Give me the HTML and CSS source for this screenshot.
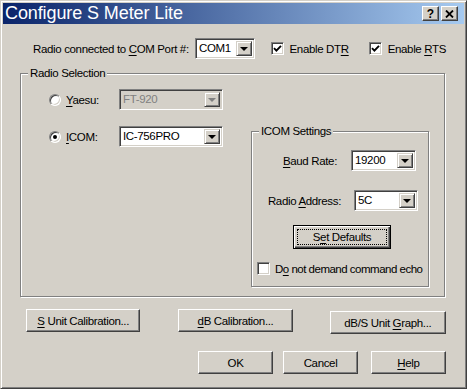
FILE: index.html
```html
<!DOCTYPE html>
<html lang="en">
<head>
    <meta charset="UTF-8">
    <title>Configure S Meter Lite</title>
    <link rel="stylesheet" href="styles.css">
</head>
<body>
    <div class="window">
        <div class="titlebar">
            <span class="title">Configure S Meter Lite</span>
            <div class="tb-buttons">
                <span class="tb-btn tb-help">?</span>
                <span class="tb-btn">
                    <svg width="9" height="8" viewBox="0 0 9 8"><path d="M1 0.5 L8 7.5 M8 0.5 L1 7.5" stroke="#000" stroke-width="1.8" fill="none"/></svg>
                </span>
            </div>
        </div>

        <div class="dialog">
            <!-- COM port row -->
            <div class="com-row">
                <span class="com-label">Radio connected to <u>C</u>OM Port #:</span>
                <div class="combo combo-com">
                    <span class="combo-text">COM1</span>
                    <span class="combo-btn"><i class="arrow"></i></span>
                </div>
                <span class="check check-dtr"><svg width="9" height="9" viewBox="0 0 9 9"><path d="M1 4.2 L3.4 6.6 L8 1.8" stroke="#000" stroke-width="1.9" fill="none"/></svg></span>
                <span class="check-label">Enable DT<u>R</u></span>
                <span class="check check-rts"><svg width="9" height="9" viewBox="0 0 9 9"><path d="M1 4.2 L3.4 6.6 L8 1.8" stroke="#000" stroke-width="1.9" fill="none"/></svg></span>
                <span class="check-label">Enable <u>R</u>TS</span>
            </div>

            <!-- Radio selection group -->
            <div class="group radio-group">
                <span class="group-title">Radio Selection</span>
                <div class="radio-layout">
                    <div class="radio-col">
                        <div class="radio-row">
                            <span class="radio"></span>
                            <span class="radio-label"><u>Y</u>aesu:</span>
                            <div class="combo combo-radio disabled">
                                <span class="combo-text">FT-920</span>
                                <span class="combo-btn"><i class="arrow"></i></span>
                            </div>
                        </div>
                        <div class="radio-row radio-row-2">
                            <span class="radio selected"></span>
                            <span class="radio-label"><u>I</u>COM:</span>
                            <div class="combo combo-radio">
                                <span class="combo-text">IC-756PRO</span>
                                <span class="combo-btn"><i class="arrow"></i></span>
                            </div>
                        </div>
                    </div>

                    <div class="group icom-group">
                        <span class="group-title">ICOM Settings</span>
                        <div class="setting-row baud-row">
                            <span><u>B</u>aud Rate:</span>
                            <div class="combo combo-baud">
                                <span class="combo-text">19200</span>
                                <span class="combo-btn"><i class="arrow"></i></span>
                            </div>
                        </div>
                        <div class="setting-row addr-row">
                            <span>Radio <u>A</u>ddress:</span>
                            <div class="combo combo-addr">
                                <span class="combo-text">5C</span>
                                <span class="combo-btn"><i class="arrow"></i></span>
                            </div>
                        </div>
                        <button class="btn btn-default set-defaults"><span class="focus">S<u>e</u>t Defaults</span></button>
                        <div class="echo-row">
                            <span class="check"></span>
                            <span class="check-label echo-label">D<u>o</u> not demand command echo</span>
                        </div>
                    </div>
                </div>
            </div>

            <!-- Calibration buttons -->
            <div class="btn-row calib-row">
                <button class="btn btn-calib"><u>S</u> Unit Calibration...</button>
                <button class="btn btn-calib btn-db"><u>d</u>B Calibration...</button>
                <button class="btn btn-calib btn-graph">dB/S Unit <u>G</u>raph...</button>
            </div>

            <!-- Dialog buttons -->
            <div class="btn-row dialog-row">
                <button class="btn btn-dlg">OK</button>
                <button class="btn btn-dlg btn-cancel">Cancel</button>
                <button class="btn btn-dlg btn-help"><u>H</u>elp</button>
            </div>
        </div>
    </div>
</body>
</html>
```

FILE: styles.css
```css
html, body {
    margin: 0;
    padding: 0;
    background-color: #d4d0c8;
}
body {
    font-family: 'Liberation Sans', Arial, sans-serif;
    font-size: 11.5px;
    letter-spacing: -0.35px;
    color: #000;
    white-space: nowrap;
}
u {
    text-decoration-thickness: 1px;
    text-underline-offset: 2px;
}
.window {
    width: 467px;
    height: 389px;
    box-sizing: border-box;
    border: 1px solid;
    border-color: #d4d0c8 #404040 #404040 #d4d0c8;
    box-shadow: inset 1px 1px 0 #fff, inset -1px -1px 0 #808080;
    padding: 2px;
    background-color: #d4d0c8;
}
.titlebar {
    height: 21px;
    display: flex;
    align-items: center;
    justify-content: space-between;
    background: linear-gradient(to right, #0a246a, #a6caf0);
    padding-left: 2px;
}
.title {
    font-size: 18px;
    letter-spacing: -0.1px;
    color: #fff;
    line-height: 21px;
}
.tb-buttons {
    display: flex;
    gap: 2px;
    margin-right: 6px;
}
.tb-btn {
    width: 17px;
    height: 15px;
    box-sizing: border-box;
    background-color: #d4d0c8;
    border: 1px solid;
    border-color: #fff #404040 #404040 #fff;
    box-shadow: inset -1px -1px 0 #808080;
    display: flex;
    align-items: center;
    justify-content: center;
}
.tb-help {
    font-weight: bold;
    font-size: 12px;
    letter-spacing: 0;
    line-height: 1;
}
.dialog {
    padding: 14px 18px 0 17px;
}

/* COM row */
.com-row {
    display: flex;
    align-items: center;
    height: 21px;
    margin-left: 13px;
}
.com-label {
    width: 154px;
}
.combo {
    display: flex;
    height: 21px;
    box-sizing: border-box;
    background-color: #fff;
    border: 1px solid;
    border-color: #808080 #fff #fff #808080;
    box-shadow: inset 1px 1px 0 #404040, inset -1px -1px 0 #d4d0c8;
    padding: 2px;
}
.combo-text {
    flex: 1;
    line-height: 15px;
    padding-left: 1px;
}
.combo-btn {
    width: 16px;
    box-sizing: border-box;
    background-color: #d4d0c8;
    border: 1px solid;
    border-color: #d4d0c8 #404040 #404040 #d4d0c8;
    box-shadow: inset 1px 1px 0 #fff, inset -1px -1px 0 #808080;
    display: flex;
    align-items: center;
    justify-content: center;
}
.arrow {
    width: 0;
    height: 0;
    border-left: 4px solid transparent;
    border-right: 4px solid transparent;
    border-top: 4px solid #000;
}
.combo.disabled {
    background-color: #d4d0c8;
    color: #808080;
}
.combo.disabled .arrow {
    border-top-color: #808080;
}
.combo-com {
    width: 65px;
    margin-left: 8px;
}
.check {
    width: 13px;
    height: 13px;
    box-sizing: border-box;
    background-color: #fff;
    border: 1px solid;
    border-color: #808080 #fff #fff #808080;
    box-shadow: inset 1px 1px 0 #404040, inset -1px -1px 0 #d4d0c8;
    display: flex;
    align-items: center;
    justify-content: center;
    flex-shrink: 0;
}
.check-dtr {
    margin-left: 16px;
}
.check-rts {
    margin-left: 20px;
}
.check-label {
    margin-left: 6px;
}
.echo-label {
    margin-left: 5px;
    letter-spacing: -0.5px;
}

/* Group boxes */
.group {
    position: relative;
    border: 1px solid #808080;
    box-shadow: inset 1px 1px 0 #fff, 1px 1px 0 #fff;
}
.group-title {
    position: absolute;
    top: -8px;
    left: 7px;
    padding: 0 2px;
    background-color: #d4d0c8;
    line-height: 15px;
}
.radio-group {
    margin-top: 14px;
    width: 425px;
    box-sizing: border-box;
    padding: 15px 0 9px 28px;
}
.radio-layout {
    display: flex;
    align-items: flex-start;
}
.radio-row {
    display: flex;
    align-items: center;
    height: 21px;
}
.radio-row-2 {
    margin-top: 16px;
}
.radio {
    width: 12px;
    height: 12px;
    box-sizing: border-box;
    border-radius: 50%;
    background-color: #fff;
    border: 1px solid;
    border-color: #808080 #fff #fff #808080;
    box-shadow: inset 1px 1px 0 #404040, inset -1px -1px 0 #d4d0c8;
    position: relative;
}
.radio.selected::after {
    content: "";
    position: absolute;
    left: 3px;
    top: 3px;
    width: 4px;
    height: 4px;
    border-radius: 50%;
    background-color: #000;
}
.radio-label {
    margin-left: 5px;
    width: 53px;
}
.combo-radio {
    width: 104px;
}

/* ICOM settings */
.icom-group {
    margin-left: 28px;
    margin-top: 42px;
    width: 178px;
    height: 156px;
    box-sizing: border-box;
    padding-top: 18px;
}
.setting-row {
    display: flex;
    align-items: center;
    justify-content: flex-end;
    height: 21px;
}
.baud-row {
    margin-right: 12px;
}
.combo-baud {
    width: 65px;
    margin-left: 14px;
}
.addr-row {
    margin-top: 19px;
    margin-right: 10px;
}
.combo-addr {
    width: 64px;
    margin-left: 13px;
}
.echo-row {
    display: flex;
    align-items: center;
    margin-top: 13px;
    margin-left: 5px;
}

/* Buttons */
.btn {
    font-family: inherit;
    font-size: 11.5px;
    letter-spacing: -0.35px;
    color: #000;
    background-color: #d4d0c8;
    height: 23px;
    box-sizing: border-box;
    border: 1px solid;
    border-color: #fff #404040 #404040 #fff;
    box-shadow: inset -1px -1px 0 #808080;
    padding: 0;
    border-radius: 0;
}
.btn-default {
    border: 1px solid #000;
    box-shadow: inset 1px 1px 0 #fff, inset -1px -1px 0 #404040, inset -2px -2px 0 #808080;
    padding: 3px;
}
.set-defaults {
    display: block;
    width: 98px;
    height: 24px;
    margin-top: 14px;
    margin-left: 41px;
}
.focus {
    display: block;
    height: 100%;
    box-sizing: border-box;
    border: 1px dotted #000;
    line-height: 14px;
}
.btn-row {
    display: flex;
    align-items: flex-start;
}
.calib-row {
    margin-top: 12px;
    margin-left: 6px;
}
.btn-calib {
    width: 115px;
}
.btn-db {
    margin-left: 38px;
}
.btn-graph {
    width: 117px;
    margin-left: 37px;
    margin-top: 2px;
}
.dialog-row {
    justify-content: flex-end;
    margin-top: 17px;
}
.btn-dlg {
    width: 75px;
}
.btn-cancel {
    margin-left: 10px;
}
.btn-help {
    margin-left: 13px;
}
```
